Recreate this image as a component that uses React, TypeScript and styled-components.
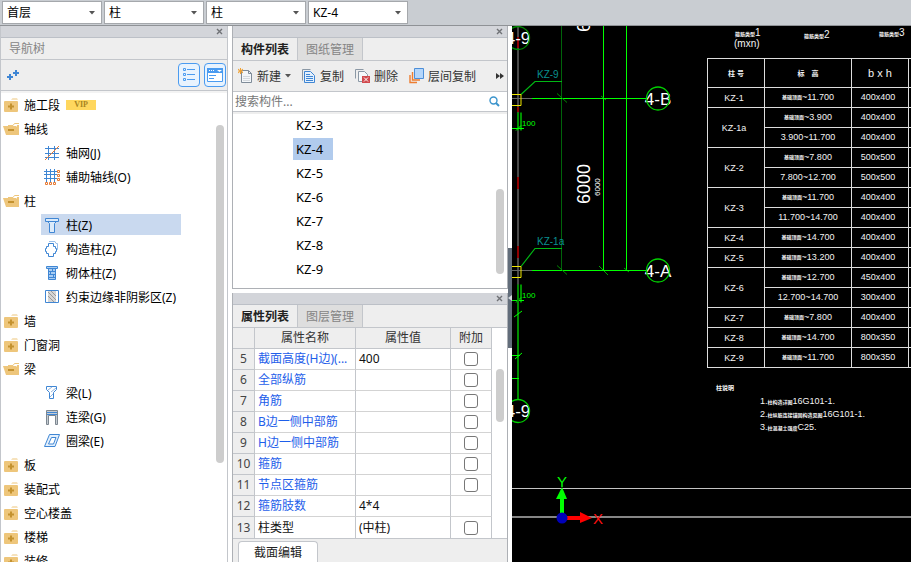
import React, { useState } from "react";
import styled, { createGlobalStyle } from "styled-components";

const Global = createGlobalStyle`
  * { box-sizing: border-box; }
  body { margin: 0; }
  body, button, input, select, table {
    font-family: "Noto Sans", "Noto Sans CJK SC", sans-serif;
    font-size: 12px;
    color: #111;
  }
  button { border: 0; padding: 0; background: none; cursor: pointer; white-space: nowrap; }
  ul { list-style: none; margin: 0; padding: 0; }
`;

const c = {
  chrome: "#c9cdd2",
  strip: "#d3d5da",
  panel: "#eeeeee",
  line: "#c3c6cb",
  frame: "#adb0b5",
  blue: "#3f86d4",
  green: "#00ff00",
  darkGreen: "#00640a",
};

/* ---------- shell ---------- */

const Shell = styled.div`
  height: 100vh;
  display: flex;
  flex-direction: column;
  overflow: hidden;
  background: #fff;
`;

const TopBar = styled.header`
  flex: none;
  height: 26px;
  display: flex;
  gap: 2px;
  padding: 1px 2px;
  background: ${c.chrome};
  border-bottom: 1px solid #8f9296;
`;

const ComboWrap = styled.label`
  display: grid;
  grid-template-columns: minmax(0, 1fr) 12px;
  align-items: center;
  width: 100px;
  height: 23px;
  background: #fff;
  border: 1px solid #a5a8ac;
`;

const ComboSelect = styled.select`
  grid-area: 1 / 1 / 2 / 3;
  appearance: none;
  width: 100%;
  height: 21px;
  border: 0;
  padding: 0 4px;
  background: transparent;
  color: #000;
`;

const ComboArrow = styled.svg`
  grid-area: 1 / 2;
  pointer-events: none;
`;

const Workspace = styled.div`
  flex: 1;
  min-height: 0;
  display: grid;
  grid-template-columns: 228px 280px 4px minmax(0, 1fr);
`;

const MiddleColumn = styled.div`
  min-height: 0;
  display: flex;
  flex-direction: column;
  gap: 4px;
`;

const Strip = styled.div`
  flex: none;
  height: 12px;
  display: flex;
  justify-content: flex-end;
  align-items: center;
  padding-right: 4px;
  background: ${c.strip};
  border-bottom: 1px solid #bcc0c7;
`;

const CloseButton = styled.button`
  display: flex;
  height: 10px;
  align-items: center;
`;

/* ---------- navigation ---------- */

const Nav = styled.nav`
  display: flex;
  flex-direction: column;
  min-height: 0;
  border-left: 1px solid ${c.line};
  border-right: 1px solid ${c.line};
`;

const NavTitle = styled.h2`
  flex: none;
  margin: 0;
  height: 22px;
  padding-left: 8px;
  line-height: 22px;
  font-size: 12px;
  font-weight: 400;
  color: #858585;
  background: ${c.panel};
  border-bottom: 1px solid ${c.line};
`;

const NavTools = styled.div`
  flex: none;
  height: 31px;
  display: flex;
  align-items: center;
  gap: 4px;
  padding: 0 1px 0 6px;
  background: ${c.panel};
  border-bottom: 1px solid ${c.line};
`;

const AddButton = styled.button`
  display: flex;
  margin-right: auto;
`;

const ViewButton = styled.button`
  width: 22px;
  height: 24px;
  display: flex;
  align-items: center;
  justify-content: center;
  border: 1px solid #4a9bf0;
  border-radius: 4px;
  background: #e8f3fe;
`;

const NavBody = styled.div`
  flex: 1;
  min-height: 0;
  display: flex;
  overflow: hidden;
  border-top: 2px solid #f3f3f3;
`;

const Tree = styled.ul`
  flex: 1;
`;

const GroupButton = styled.button`
  display: flex;
  align-items: center;
  gap: 4px;
  height: 24px;
  padding-left: 2px;
  color: #000;
`;

const Vip = styled.span`
  width: 30px;
  height: 10px;
  margin-left: 2px;
  line-height: 10px;
  text-align: center;
  font-family: "Liberation Serif", serif;
  font-size: 8px;
  font-weight: 700;
  color: #a88422;
  background: #ffd75e;
`;

const Leaf = styled.li`
  display: flex;
  height: 24px;
  padding: 1px 0 2px 40px;
`;

const LeafButton = styled.button<{ $on?: boolean }>`
  display: flex;
  align-items: center;
  gap: 6px;
  padding-left: 3px;
  min-width: 140px;
  color: #000;
  background: ${(p) => (p.$on ? "#c9d9ef" : "transparent")};
`;

const Track = styled.div<{ $top: number; $left?: number }>`
  flex: none;
  width: ${(p) => 11 + (p.$left || 0)}px;
  padding: ${(p) => `${p.$top}px 3px 0 ${p.$left || 0}px`};
`;

const Thumb = styled.div<{ $len: number }>`
  height: ${(p) => p.$len}px;
  border-radius: 4px;
  background: #cdcdcd;
`;

/* ---------- docked panels ---------- */

const Panel = styled.section<{ $grow?: boolean }>`
  flex: ${(p) => (p.$grow ? "1 1 0" : "none")};
  min-height: 0;
  margin-left: 4px;
  display: flex;
  flex-direction: column;
  background: ${c.panel};
  border: solid ${c.frame};
  border-width: ${(p) => (p.$grow ? "0 1px 1px" : "0 1px")};
`;

const Tabs = styled.div`
  flex: none;
  display: flex;
  height: 23px;
  border-bottom: 1px solid ${c.line};
`;

const Tab = styled.button<{ $on?: boolean }>`
  width: 65px;
  height: 22px;
  border-right: 1px solid ${c.line};
  font-weight: ${(p) => (p.$on ? 700 : 400)};
  color: ${(p) => (p.$on ? "#222" : "#858585")};
  background: ${(p) => (p.$on ? c.panel : "#dedede")};
`;

const Tools = styled.div`
  flex: none;
  display: flex;
  align-items: center;
  gap: 11px;
  height: 31px;
  padding: 0 3px 0 5px;
  border-bottom: 1px solid ${c.line};
`;

const Tool = styled.button`
  display: flex;
  align-items: center;
  gap: 4px;
  color: #333;
`;

const MoreButton = styled.button`
  display: flex;
  margin-left: auto;
`;

const Search = styled.label`
  flex: none;
  display: flex;
  align-items: center;
  height: 20px;
  padding: 0 7px 0 2px;
  background: #fff;
  border-bottom: 1px solid ${c.line};
`;

const SearchInput = styled.input`
  flex: 1;
  min-width: 0;
  height: 18px;
  border: 0;
  padding: 0;
  outline: 0;
  &::placeholder { color: #777; opacity: 1; }
`;

const ListBody = styled.div`
  flex: 1;
  min-height: 0;
  display: flex;
  overflow: hidden;
  background: #fff;
  border-top: 2px solid ${c.panel};
`;

const Items = styled.ul`
  flex: 1;
  padding: 0 0 0 60px;
`;

const Item = styled.button<{ $on?: boolean }>`
  display: block;
  height: 22px;
  margin: 0 0 2px;
  padding: 0 10px 0 3px;
  font-size: 13px;
  color: #000;
  background: ${(p) => (p.$on ? "#b1cbed" : "transparent")};
`;

const PropsBody = styled.div`
  display: flex;
  background: #fff;
  border-bottom: 1px solid ${c.line};
`;

const PropTable = styled.table`
  flex: 1;
  table-layout: fixed;
  border-collapse: separate;
  border-spacing: 0;
  th, td {
    height: 21px;
    padding: 0 3px;
    line-height: 18px;
    font-weight: 400;
    text-align: left;
    white-space: nowrap;
    overflow: hidden;
    border-right: 1px solid ${c.line};
    border-bottom: 1px solid #d3d3d3;
  }
  thead th { text-align: center; color: #333; background: ${c.panel}; border-bottom-color: ${c.line}; }
  tbody th { text-align: center; padding: 0; color: #444; background: ${c.panel}; border-bottom-color: ${c.line}; }
  tbody tr:last-child > * { border-bottom: 0; }
`;

const NameCell = styled.td<{ $plain?: boolean }>`
  color: ${(p) => (p.$plain ? "#111" : "#1e5eea")};
`;

const CheckCell = styled.td`
  && { padding: 0; text-align: center; }
`;

const Check = styled.input`
  appearance: none;
  display: block;
  width: 14px;
  height: 14px;
  margin: 0 auto;
  border: 1px solid #777;
  border-radius: 3px;
  background: #fff;
`;

const Footer = styled.div`
  height: 23px;
  padding: 2px 0 0 5px;
`;

const FooterTab = styled.button`
  display: block;
  width: 80px;
  height: 21px;
  border: 1px solid ${c.line};
  border-bottom: 0;
  border-radius: 4px 4px 0 0;
  background: #fff;
  color: #222;
`;

const Splitter = styled.div`
  display: flex;
  flex-direction: column;
  justify-content: center;
  padding-top: 8px;
  background: #fff;
`;

const SplitHandle = styled.button`
  height: 100px;
  display: flex;
  align-items: center;
  background: #626d7a;
`;

/* ---------- drawing canvas ---------- */

const Canvas = styled.main`
  position: relative;
  overflow: hidden;
  background: #000;
`;

const Plan = styled.svg`
  display: block;
  width: 100%;
  height: 100%;
  text { font-family: "Liberation Sans", "Noto Sans CJK SC", sans-serif; }
`;

const Schedule = styled.table`
  position: absolute;
  left: 195px;
  top: 32px;
  width: 264px;
  table-layout: fixed;
  border-collapse: collapse;
  th, td {
    height: 20px;
    padding: 0 0 2px;
    border: 1px solid #ddd;
    text-align: center;
    font-family: "Liberation Sans", "Noto Sans CJK SC", sans-serif;
    font-size: 9px;
    line-height: 12px;
    font-weight: 400;
    white-space: nowrap;
    color: #f4f4f4;
  }
  thead th { height: 29px; font-size: 11px; padding: 0; }
  tbody th { padding: 0 4px 0 0; }
  td:nth-last-child(2) { padding-right: 4px; }
`;

const Tiny = styled.span<{ $size?: number; $gap?: number }>`
  display: inline-block;
  font-size: ${(p) => p.$size || 5}px;
  font-weight: 700;
  line-height: 10px;
  vertical-align: middle;
  margin-right: ${(p) => p.$gap || 0}px;
`;

/* ---------- icons ---------- */

const Down = () => (
  <svg width="6" height="4" viewBox="0 0 6 4"><path d="M0 0h6L3 3.5z" fill="#555" /></svg>
);

const Close = () => (
  <svg width="7" height="7" viewBox="0 0 7 7">
    <path d="M1 1l5 5M6 1L1 6" stroke="#707276" strokeWidth="1.4" />
  </svg>
);

const Folder = ({ open }: { open: boolean }) =>
  open ? (
    <svg width="17" height="14" viewBox="0 0 17 14">
      <path d="M5 3.5h5l1.5-2H16" fill="none" stroke="#eec67b" />
      <path d="M0 4h13l2 2-1 7H3z" fill="#eec67b" />
      <path d="M14 3h2v10h-3z" fill="#eec67b" />
      <path d="M5 8h6" stroke="#c4922f" strokeWidth="2" />
    </svg>
  ) : (
    <svg width="17" height="14" viewBox="0 0 17 14">
      <path d="M8 1.5l1.5-1H14l1 1z" fill="#eec67b" />
      <rect x="1" y="3" width="14" height="11" rx="1" fill="#eec67b" />
      <path d="M5 8.5h6M8 5.5v6" stroke="#c4922f" strokeWidth="2" />
    </svg>
  );

const LeafIcon = ({ kind }: { kind: string }) => {
  const shapes: Record<string, React.ReactNode> = {
    grid: (
      <>
        <path d="M1 3.5h14M1 8.5h14M1 12.5h14M4.5 1v14M10.5 1v14" />
        <path d="M1 15L15 1" stroke="#e77b35" />
      </>
    ),
    aux: (
      <>
        <path d="M0 2.5h13M0 5.5h13M0 9.5h13M2.5 0v13M6.5 0v13M10.5 0v13" />
        <path d="M13.5 1.5h2v2h-2zM13.5 5.5h2v2h-2zM13.5 9.5h2v2h-2zM1.5 13.5h2v2h-2zM5.5 13.5h2v2h-2zM9.5 13.5h2v2h-2z" stroke="#e77b35" />
      </>
    ),
    column: <path d="M1.5 1.5h13v3h-13zM3.5 4.5h9l-2 2v9h-5v-9z" fill="#dcebfa" />,
    tie: (
      <>
        <path d="M5 .5h6l1 2h1.5v6H13" stroke="#9bbfe8" />
        <path d="M4.5 2.5h5v3h2v2h1v3h-1v2h-2v3h-5v-3h-2v-2h-1v-3h1v-2h2z" fill="#fff" />
      </>
    ),
    masonry: (
      <>
        <path d="M2.5 1.5h11v2h-11zM4.5 3.5h7v11h-7z" fill="#a9cdf2" />
        <path d="M5 6.5h6M5 9.5h6M5 12.5h6M8.5 4v2M6.5 7v2M9.5 10v2" />
      </>
    ),
    zone: (
      <>
        <path d="M1.5 1.5h13v12h-13z" fill="#fff" />
        <path d="M4 2h8v11H4z" fill="#d5d5d5" stroke="none" />
        <path d="M4 3l8 8M4 7l6 6M7 2l5 5" stroke="#999" />
      </>
    ),
    beam: (
      <>
        <path d="M2.5 1.5h10v3l-3 3v6h-4v-6l-3-3z" fill="#fff" />
        <path d="M4 5l4-3M7 7l5-4M6 12l3-3" stroke="#8fb4df" />
      </>
    ),
    link: (
      <>
        <path d="M2.5 1.5h11v14h-2v-9h-7v9h-2z" fill="#c6ccd2" stroke="#7d8790" />
        <path d="M3 3.5h10M3 5.5h10" stroke="#3f86d4" />
      </>
    ),
    ring: <path d="M5.5 1.5h10l-4.500 12H.5zM7.5 4.5h4.500l-2.500 6.500h-5z" fill="#e4f0fc" fillRule="evenodd" />,
  };
  return (
    <svg width="16" height="16" viewBox="0 0 16 16" fill="none" stroke={c.blue}>{shapes[kind]}</svg>
  );
};

const NewIcon = () => (
  <svg width="15" height="16" viewBox="0 0 15 16" fill="none">
    <path d="M3.5 2.5h7l3 3v9h-10z" fill="#f4f7fa" stroke="#7f8c99" />
    <path d="M10.5 2.5v3h3" stroke="#7f8c99" />
    <path d="M5 8.5h7M5 10.5h7M5 12.5h7" stroke="#d4d9de" />
    <path d="M0 1l5 4M5 1L0 5M2.5 0v6M0 3h5" stroke="#f0a030" />
  </svg>
);

const CopyIcon = () => (
  <svg width="14" height="16" viewBox="0 0 14 16" fill="none">
    <path d="M.5 12.5V1.5h8" stroke="#8b98a5" />
    <path d="M2.5 3.5h6l4 4v7h-10z" fill="#e6f1fd" stroke="#3f86d4" />
    <path d="M4 6.5h4M4 8.5h7M4 10.5h7M4 12.5h7" stroke="#3f86d4" />
  </svg>
);

const DeleteIcon = () => (
  <svg width="15" height="16" viewBox="0 0 15 16" fill="none">
    <path d="M.5 10.5v-9h8" stroke="#8b98a5" />
    <path d="M3.5 13.5v-10h6l3 3v7z" fill="#f6f8fa" stroke="#8b98a5" />
    <path d="M7 8h8v7H7z" fill="#d1494d" />
    <path d="M9 9.5l4 4M13 9.5l-4 4" stroke="#fff" />
  </svg>
);

const LayerIcon = () => (
  <svg width="15" height="16" viewBox="0 0 15 16" fill="none">
    <path d="M1 7v7.5h7" stroke="#ed7d31" strokeWidth="1.4" />
    <path d="M3.5 4v8H11" stroke="#ed7d31" strokeWidth="1.4" />
    <path d="M5.5.5h9v10h-9z" fill="#b4d6fb" stroke="#4d8fd8" />
  </svg>
);

/* ---------- data ---------- */

type Group = { name: string; vip?: boolean; items?: [string, string][] };

const groups: Group[] = [
  { name: "施工段", vip: true },
  { name: "轴线", items: [["grid", "轴网(J)"], ["aux", "辅助轴线(O)"]] },
  {
    name: "柱",
    items: [["column", "柱(Z)"], ["tie", "构造柱(Z)"], ["masonry", "砌体柱(Z)"], ["zone", "约束边缘非阴影区(Z)"]],
  },
  { name: "墙" },
  { name: "门窗洞" },
  { name: "梁", items: [["beam", "梁(L)"], ["link", "连梁(G)"], ["ring", "圈梁(E)"]] },
  { name: "板" },
  { name: "装配式" },
  { name: "空心楼盖" },
  { name: "楼梯" },
  { name: "装修" },
];

const members = ["KZ-3", "KZ-4", "KZ-5", "KZ-6", "KZ-7", "KZ-8", "KZ-9"];

const properties: { n: number; name: string; value?: string; check?: boolean; plain?: boolean }[] = [
  { n: 5, name: "截面高度(H边)(...", value: "400", check: true },
  { n: 6, name: "全部纵筋", check: true },
  { n: 7, name: "角筋", check: true },
  { n: 8, name: "B边一侧中部筋", check: true },
  { n: 9, name: "H边一侧中部筋", check: true },
  { n: 10, name: "箍筋", check: true },
  { n: 11, name: "节点区箍筋", check: true },
  { n: 12, name: "箍筋肢数", value: "4*4" },
  { n: 13, name: "柱类型", value: "(中柱)", check: true, plain: true },
];

/* A leading "~" marks a range that starts at the foundation top. */
const schedule: [string, [string, string][]][] = [
  ["KZ-1", [["~11.700", "400x400"]]],
  ["KZ-1a", [["~3.900", "400x400"], ["3.900~11.700", "400x400"]]],
  ["KZ-2", [["~7.800", "500x500"], ["7.800~12.700", "500x500"]]],
  ["KZ-3", [["~11.700", "400x400"], ["11.700~14.700", "400x400"]]],
  ["KZ-4", [["~14.700", "400x400"]]],
  ["KZ-5", [["~13.200", "400x400"]]],
  ["KZ-6", [["~12.700", "450x400"], ["12.700~14.700", "300x400"]]],
  ["KZ-7", [["~7.800", "400x400"]]],
  ["KZ-8", [["~14.700", "800x350"]]],
  ["KZ-9", [["~11.700", "800x350"]]],
];

/* ---------- parts ---------- */

const Combo = ({ label, options }: { label: string; options: string[] }) => (
  <ComboWrap>
    <ComboSelect aria-label={label}>
      {options.map((o) => <option key={o}>{o}</option>)}
    </ComboSelect>
    <ComboArrow width="6" height="4" viewBox="0 0 6 4"><path d="M0 0h6L3 3.5z" fill="#555" /></ComboArrow>
  </ComboWrap>
);

const PanelStrip = () => (
  <Strip><CloseButton aria-label="关闭"><Close /></CloseButton></Strip>
);

const Bubble = ({ x, y, label, dim }: { x: number; y: number; label: string; dim?: boolean }) => (
  <g>
    <text x={x} y={y + 6} fontSize="17" fill="#fff" textAnchor="middle">{label}</text>
    <circle cx={x} cy={y} r="11.5" fill="none" stroke={dim ? "#008a00" : "#00d000"} strokeWidth="1.3" />
  </g>
);

const Member = ({ y, label, lead }: { y: number; label: string; lead: number }) => (
  <g fill="none">
    <path d={`M0 ${y}h20`} stroke="#666" />
    <path d={`M20 ${y}h115`} stroke={c.green} />
    <path d={`M9 ${y - 4}L23 ${lead}h27`} stroke="#00b814" strokeWidth="1.2" />
    <path d={`M0 ${y - 4}h9v11H0`} stroke="#f0e800" />
    <path d={`M45 ${y - 5}l10 9`} stroke="#008a00" />
    <text x="25" y={lead - 4} fontSize="10" fill="#0a9090">{label}</text>
    <path d={`M6 ${y + 14}v18M9 ${y + 14}v18`} stroke="#009000" strokeWidth="2" />
    <path d={`M0 ${y + 30}h12`} stroke={c.green} />
    <path d={`M4 ${y + 32}l5-5`} stroke={c.green} />
    <text x="10" y={y + 27} fontSize="8" fill={c.green}>100</text>
  </g>
);

const PlanDrawing = () => (
  <Plan>
    <path d="M6 0v374" stroke="#484848" strokeWidth="2" />
    <path d="M6 11v11M6 81v5M6 151v12M6 220v12" stroke="#900000" strokeWidth="2" />
    <path d="M49.5 0v245" stroke={c.darkGreen} />
    <path d="M91.5 0v245" stroke={c.green} />
    <path d="M114.5 0v245" stroke={c.green} />
    <path d="M87 240l9 9M112 242l5 4M89 70l5 4" stroke="#00a800" />
    <Member y={72.5} label="KZ-9" lead={55.5} />
    <Member y={244.5} label="KZ-1a" lead={222.5} />
    <Bubble x={6} y={12} label="4-9" dim />
    <Bubble x={146} y={72.5} label="4-B" />
    <Bubble x={146} y={244.5} label="4-A" />
    <path d="M6 260v113" stroke="#008c00" strokeWidth="2" />
    <path d="M0 329.5h8M0 352.5h7M2 291l8-6M3 333l7-6" stroke={c.green} />
    <Bubble x={6} y={385} label="4-9" />
    <g fill="#fff">
      <text transform="translate(78 178) rotate(-90)" fontSize="18">6000</text>
      <text transform="translate(78 6) rotate(-90)" fontSize="18">6000</text>
      <text transform="translate(88 170) rotate(-90)" fontSize="8">6000</text>
    </g>
    <path d="M0 462.5h4000" stroke="#c4c4c4" />
    <path d="M0 491h4000" stroke="#858585" strokeWidth="2" />
    <path d="M48 488v-15h-4l6-12 5 12h-3v15z" fill={c.green} />
    <path d="M54 490h14v-4l12 6-12 5v-3H54z" fill="#ff0000" />
    <circle cx="50" cy="492" r="5.5" fill="#0000b8" />
    <text x="50" y="461" fontSize="15" fill={c.green} textAnchor="middle">Y</text>
    <text x="86" y="498" fontSize="15" fill="#ff1010" textAnchor="middle">X</text>
    <g fill="#f4f4f4" fontSize="5">
      <text x="223" y="10" fontWeight="700">箍筋类型<tspan fontSize="10" fontWeight="400">1</tspan></text>
      <text x="222" y="21" fontSize="10">(mxn)</text>
      <text x="292" y="12" fontWeight="700">箍筋类型<tspan fontSize="10" fontWeight="400">2</tspan></text>
      <text x="367" y="10" fontWeight="700">箍筋类型<tspan fontSize="10" fontWeight="400">3</tspan></text>
      <text x="204" y="364" fontSize="6" fontWeight="700">柱说明</text>
      <text x="248" y="378" fontSize="9">1.<tspan fontSize="5" fontWeight="700">柱构造详图</tspan>16G101-1.</text>
      <text x="248" y="391" fontSize="9">2.<tspan fontSize="5" fontWeight="700">柱纵筋连接锚固构造见图</tspan>16G101-1.</text>
      <text x="248" y="404" fontSize="9">3.<tspan fontSize="5" fontWeight="700">柱混凝土强度</tspan>C25.</text>
    </g>
  </Plan>
);

export default function App() {
  const [nav, setNav] = useState("柱(Z)");
  const [member, setMember] = useState("KZ-4");
  return (
    <Shell>
      <Global />
      <TopBar>
        <Combo label="楼层" options={["首层"]} />
        <Combo label="构件类别" options={["柱"]} />
        <Combo label="构件类型" options={["柱"]} />
        <Combo label="构件" options={["KZ-4"]} />
      </TopBar>
      <Workspace>
        <Nav>
          <PanelStrip />
          <NavTitle>导航树</NavTitle>
          <NavTools>
            <AddButton aria-label="添加">
              <svg width="12" height="12" viewBox="0 0 12 12">
                <path d="M0 8h6M3 5v6M6 4h6M9 1v6" stroke="#3f86d4" strokeWidth="2" />
              </svg>
            </AddButton>
            <ViewButton aria-label="列表">
              <svg width="14" height="16" viewBox="0 0 14 16" fill="none" stroke="#4a9bf0">
                <path d="M1.5 1.5h2v2h-2zM1.5 6.5h2v2h-2zM1.5 11.5h2v2h-2zM5 2.5h8M5 7.5h8M5 12.5h8" />
              </svg>
            </ViewButton>
            <ViewButton aria-label="面板">
              <svg width="16" height="14" viewBox="0 0 16 14">
                <path d="M.5.5h15v13H.5z" fill="#fff" stroke="#4a9bf0" />
                <path d="M0 0h16v5H0z" fill="#4a9bf0" />
                <path d="M2 2.5h1M4 2.5h1M6 2.5h1" stroke="#fff" />
                <path d="M10 2h5l-2.5 2z" fill="#fff" />
                <path d="M2 7.5h7M2 10.5h5" stroke="#4a9bf0" />
              </svg>
            </ViewButton>
          </NavTools>
          <NavBody>
            <Tree>
              {groups.map((g) => (
                <li key={g.name}>
                  <GroupButton aria-expanded={!!g.items}>
                    <Folder open={!!g.items} />
                    {g.name}
                    {g.vip && <Vip>VIP</Vip>}
                  </GroupButton>
                  {g.items && (
                    <ul>
                      {g.items.map(([kind, label]) => (
                        <Leaf key={label}>
                          <LeafButton $on={label === nav} onClick={() => setNav(label)}>
                            <LeafIcon kind={kind} />
                            {label}
                          </LeafButton>
                        </Leaf>
                      ))}
                    </ul>
                  )}
                </li>
              ))}
            </Tree>
            <Track $top={32}><Thumb $len={338} /></Track>
          </NavBody>
        </Nav>
        <MiddleColumn>
          <Panel $grow>
            <PanelStrip />
            <Tabs>
              <Tab $on>构件列表</Tab>
              <Tab>图纸管理</Tab>
            </Tabs>
            <Tools>
              <Tool><NewIcon />新建<Down /></Tool>
              <Tool><CopyIcon />复制</Tool>
              <Tool><DeleteIcon />删除</Tool>
              <Tool><LayerIcon />层间复制</Tool>
              <MoreButton aria-label="更多">
                <svg width="8" height="6" viewBox="0 0 8 6"><path d="M0 0l4 3-4 3zM4 0l4 3-4 3z" fill="#333" /></svg>
              </MoreButton>
            </Tools>
            <Search>
              <SearchInput placeholder="搜索构件..." aria-label="搜索构件" />
              <svg width="11" height="11" viewBox="0 0 11 11" fill="none" stroke="#3b94cc">
                <circle cx="4.5" cy="4.5" r="3.5" strokeWidth="1.4" />
                <path d="M7 7l3 3" strokeWidth="2" />
              </svg>
            </Search>
            <ListBody>
              <Items>
                {members.map((m) => (
                  <li key={m}><Item $on={m === member} onClick={() => setMember(m)}>{m}</Item></li>
                ))}
              </Items>
              <Track $top={75}><Thumb $len={85} /></Track>
            </ListBody>
          </Panel>
          <Panel>
            <PanelStrip />
            <Tabs>
              <Tab $on>属性列表</Tab>
              <Tab>图层管理</Tab>
            </Tabs>
            <PropsBody>
              <PropTable>
                <colgroup>
                  <col width="22" /><col width="101" /><col width="95" /><col width="41" />
                </colgroup>
                <thead>
                  <tr><th /><th>属性名称</th><th>属性值</th><th>附加</th></tr>
                </thead>
                <tbody>
                  {properties.map((p) => (
                    <tr key={p.n}>
                      <th scope="row">{p.n}</th>
                      <NameCell $plain={p.plain}>{p.name}</NameCell>
                      <td>{p.value}</td>
                      <CheckCell>{p.check && <Check type="checkbox" aria-label={p.name} />}</CheckCell>
                    </tr>
                  ))}
                </tbody>
              </PropTable>
              <Track $top={41} $left={4}><Thumb $len={53} /></Track>
            </PropsBody>
            <Footer><FooterTab>截面编辑</FooterTab></Footer>
          </Panel>
        </MiddleColumn>
        <Splitter>
          <SplitHandle aria-label="折叠">
            <svg width="4" height="6" viewBox="0 0 4 6"><path d="M4 0v6L0 3z" fill="#d5dae0" /></svg>
          </SplitHandle>
        </Splitter>
        <Canvas>
          <PlanDrawing />
          <Schedule>
            <colgroup>
              <col width="57" /><col width="87" /><col width="57" /><col width="63" />
            </colgroup>
            <thead>
              <tr>
                <th><Tiny $size={7} $gap={2}>柱</Tiny><Tiny $size={7}>号</Tiny></th>
                <th><Tiny $size={7} $gap={7}>标</Tiny><Tiny $size={7}>高</Tiny></th>
                <th>b x h</th>
                <th />
              </tr>
            </thead>
            <tbody>
              {schedule.map(([name, rows]) =>
                rows.map(([range, size], i) => (
                  <tr key={name + range}>
                    {i === 0 && <th scope="rowgroup" rowSpan={rows.length}>{name}</th>}
                    <td>{range.startsWith("~") && <Tiny>基础顶面</Tiny>}{range}</td>
                    <td>{size}</td>
                    <td />
                  </tr>
                ))
              )}
            </tbody>
          </Schedule>
        </Canvas>
      </Workspace>
    </Shell>
  );
}
